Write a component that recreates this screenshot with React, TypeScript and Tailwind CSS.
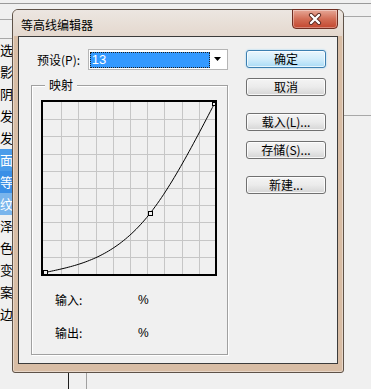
import React from "react";

const listItems = ["选", "影", "阴", "发", "发", "面", "等", "纹", "泽", "色", "变", "案", "边"];

const rowClass = (i: number) => {
  if (i === 5) return "bg-[#4a9cea] text-white";
  if (i === 6) return "bg-[#3a8fe6] text-white";
  if (i === 7) return "bg-[#7ab5ec] text-white";
  return "text-black";
};

// natural spline through (0,0) (0.62,0.35) (1,1)
function contour(x: number) {
  if (x <= 0.62) return 0.924 * x ** 3 + 0.2092 * x;
  const t = x - 0.62;
  return 1.508 * (0.38 - t) ** 3 + 0.7033 * (0.38 - t) + 2.6316 * t;
}

const curve = Array.from({ length: 81 }, (_, i) => {
  const nx = i / 80;
  const sx = 2 + nx * 169.5;
  const sy = 170.5 - contour(nx) * 169;
  return `${sx.toFixed(2)},${sy.toFixed(2)}`;
}).join(" ");

function ContourGraph() {
  const grid = Array.from({ length: 9 }, (_, k) => k + 1);
  return (
    <div className="ml-[9px] mt-[8px] h-[176px] w-[176px] border-2 border-black bg-[#f0f0f0]">
      <svg width="172" height="172" viewBox="0 0 172 172" className="block">
        {grid.map((k) => (
          <line key={"v" + k} x1={Math.round(1 + k * 17.2) + 0.5} y1="0" x2={Math.round(1 + k * 17.2) + 0.5} y2="172" stroke="#c6c6c6" strokeWidth="1" />
        ))}
        {grid.map((k) => (
          <line key={"h" + k} x1="0" y1={Math.round(k * 17.2) + 0.5} x2="172" y2={Math.round(k * 17.2) + 0.5} stroke="#c6c6c6" strokeWidth="1" />
        ))}
        <polyline points={curve} fill="none" stroke="#000" strokeWidth="1" />
        <rect x="0.5" y="168.5" width="4" height="4" fill="#f0f0f0" stroke="#000" strokeWidth="1" />
        <rect x="105.5" y="109.5" width="4" height="4" fill="#f0f0f0" stroke="#000" strokeWidth="1" />
        <rect x="169.5" y="0.5" width="3" height="3" fill="#f0f0f0" stroke="#000" strokeWidth="1" />
      </svg>
    </div>
  );
}

function Btn({ children, primary, className }: { children: React.ReactNode; primary?: boolean; className: string }) {
  return (
    <div
      className={
        primary
          ? `${className} flex h-[18px] w-[80px] items-center justify-center rounded-[3px] border border-[#3c7fb1] bg-gradient-to-b from-[#eaf6fd] via-[#d2edfb] to-[#a9dbf6] text-[12px] leading-[16px] text-black shadow-[0_0_2px_#8fd0f7,inset_0_0_0_1px_rgba(255,255,255,0.7)]`
          : `${className} flex h-[18px] w-[80px] items-center justify-center rounded-[3px] border border-[#707070] bg-gradient-to-b from-[#f4f4f4] via-[#ebebeb] to-[#d5d5d5] text-[12px] leading-[16px] text-black shadow-[inset_0_0_0_1px_rgba(255,255,255,0.8)]`
      }
    >
      {children}
    </div>
  );
}

export default function App() {
  return (
    <div className="relative flex h-[389px] w-[371px] flex-col overflow-hidden bg-[#f0f0f0] font-['Noto_Sans_CJK_SC',sans-serif]">
      {/* background app */}
      <div className="h-[4px] border-b border-[#9a9a9a]" />
      <div className="flex flex-1">
        <div className="flex w-[12px] flex-col overflow-hidden">
          <div className="h-[16px] shrink-0 border-b border-[#a8a8a8]" />
          <div className="h-[19px] shrink-0 border-b border-[#a8a8a8]" />
          {listItems.map((c, i) => (
            <div key={i} className={`h-[22px] shrink-0 whitespace-nowrap text-[13px] leading-[22px] ${rowClass(i)}`}>
              {c}
            </div>
          ))}
        </div>
        <div className="flex flex-1 flex-col">
          <div className="flex-1" />
          <div className="ml-[56px] h-[17px] w-[19px] border-l border-r border-l-[#1e1e1e] border-r-[#a0a0a0]" />
        </div>
        <div className="flex w-[28px] flex-col">
          <div className="h-[13px] border-b border-[#a8a8a8]" />
          <div className="h-[99px] border-b border-[#a8a8a8]" />
        </div>
      </div>

      {/* dialog window */}
      <div className="absolute left-[12px] top-[9px] flex h-[364px] w-[332px] flex-col rounded-t-[6px] rounded-b-[3px] border border-[#5e5248] bg-[#d8bda5] shadow-[inset_0_0_0_1px_rgba(255,255,255,0.4)]">
        <div className="flex h-[26px] shrink-0 rounded-t-[5px] bg-gradient-to-b from-[#ece6e1] to-[#e4d8ce]">
          <span className="pl-[8px] pt-[8px] text-[12px] leading-[14px] text-black">等高线编辑器</span>
          <div className="-mt-px ml-auto mr-[5px] flex h-[20px] w-[46px] items-center justify-center rounded-b-[4px] border border-[#6f2e22] bg-gradient-to-b from-[#e6a797] via-[#d26d56] to-[#c3462e] shadow-[inset_0_0_0_1px_rgba(255,255,255,0.35)]">
            <svg width="14" height="12" viewBox="0 0 14 12">
              <path d="M3 2 L11 10 M11 2 L3 10" stroke="#5a2a22" strokeWidth="4.2" strokeLinecap="round" />
              <path d="M3 2 L11 10 M11 2 L3 10" stroke="#fff" strokeWidth="2.4" strokeLinecap="round" />
            </svg>
          </div>
        </div>

        <div className="mx-[5px] mb-[8px] flex flex-1 border border-[#3b3b3b] bg-[#f0f0f0] text-black">
          <div className="flex w-[209px] flex-col pl-[12px] pt-[12px]">
            <div className="flex h-[21px] items-center">
              <span className="w-[57px] pl-[6px] text-[12px] leading-[14px]">预设(P):</span>
              <div className="flex h-[21px] w-[141px] items-center border border-[#b5b5b5] bg-white pl-px">
                <div className="flex h-[16px] w-[120px] items-center border border-dotted border-[#202020] bg-[#3399ff] pl-px font-['Liberation_Sans',sans-serif] text-[13px] leading-[14px] text-white">
                  13
                </div>
                <div className="flex flex-1 justify-center">
                  <svg width="8" height="5" viewBox="0 0 8 5">
                    <path d="M0 0 H7 L3.5 4 Z" fill="#000" />
                  </svg>
                </div>
              </div>
            </div>

            <div className="mt-[15px] flex h-[270px] w-[197px] flex-col border border-[#a0a0a0] shadow-[inset_1px_1px_0_#fff,1px_1px_0_#fff]">
              <div className="-mt-[8px] ml-[13px] w-fit bg-[#f0f0f0] px-[4px] text-[12px] leading-[14px]">映射</div>
              <ContourGraph />
              <div className="ml-[23px] mt-[16px] flex h-[16px] items-center text-[12px] leading-[16px]">
                <span className="w-[83px]">输入:</span>
                <span className="font-['Liberation_Sans',sans-serif]">%</span>
              </div>
              <div className="ml-[23px] mt-[17px] flex h-[16px] items-center text-[12px] leading-[16px]">
                <span className="w-[83px]">输出:</span>
                <span className="font-['Liberation_Sans',sans-serif]">%</span>
              </div>
            </div>
          </div>

          <div className="ml-[18px] flex flex-col pt-[13px]">
            <Btn primary className="mt-0">确定</Btn>
            <Btn className="mt-[10px]">取消</Btn>
            <Btn className="mt-[17px]">载入(L)...</Btn>
            <Btn className="mt-[10px]">存储(S)...</Btn>
            <Btn className="mt-[17px]">新建...</Btn>
          </div>
        </div>
      </div>
    </div>
  );
}
